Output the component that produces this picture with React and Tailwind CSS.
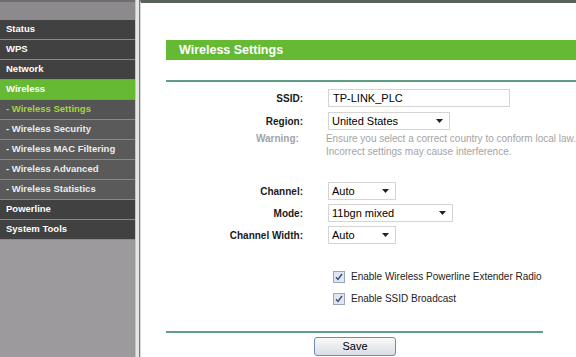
import React from 'react';

const menu = [
  { label: 'Status', type: 'main' },
  { label: 'WPS', type: 'main' },
  { label: 'Network', type: 'main' },
  { label: 'Wireless', type: 'active' },
  { label: '- Wireless Settings', type: 'subActive' },
  { label: '- Wireless Security', type: 'sub' },
  { label: '- Wireless MAC Filtering', type: 'sub' },
  { label: '- Wireless Advanced', type: 'sub' },
  { label: '- Wireless Statistics', type: 'sub' },
  { label: 'Powerline', type: 'main' },
  { label: 'System Tools', type: 'main' },
];

const itemClass = {
  main: 'bg-[#414141] text-white',
  active: 'bg-[#66b933] text-white',
  subActive: 'bg-[#545454] text-[#a8d43c]',
  sub: 'bg-[#5a5a5a] text-[#ececec]',
};

const Select = ({ value, width }) => (
  <div
    className={`${width} h-[18px] border border-[#d4d4d4] bg-white flex items-center justify-between pl-[3px] pr-[6px] text-[11px]`}
  >
    <span>{value}</span>
    <svg width="7" height="4" viewBox="0 0 7 4">
      <path d="M0 0h7L3.5 4z" fill="#222" />
    </svg>
  </div>
);

const Row = ({ label, children }) => (
  <div className="flex items-center h-[18px]">
    <div className="w-[162px] text-right pr-[25px] font-bold text-[#1a1a1a] whitespace-nowrap">{label}</div>
    {children}
  </div>
);

const Check = ({ label }) => (
  <div className="flex items-center gap-[6px] pl-[167px] h-[13px]">
    <div className="w-[12px] h-[12px] border border-[#9aa6b8] bg-[#dfe6ef] flex items-center justify-center">
      <svg width="8" height="8" viewBox="0 0 8 8">
        <path d="M1 4.2l2 2.2L7 1" stroke="#3a4a7a" strokeWidth="1.4" fill="none" />
      </svg>
    </div>
    <span className="text-[#222] whitespace-nowrap">{label}</span>
  </div>
);

export default function App() {
  return (
    <div className="w-[576px] h-[357px] overflow-hidden flex bg-white text-[10px] font-['Liberation_Sans',Arial,sans-serif]">
      {/* Sidebar */}
      <div className="w-[135px] shrink-0 h-full bg-[#9c9a9c] flex flex-col">
        <div className="h-[20px] shrink-0 bg-[#8c8a8c] border-t-[2px] border-[#6d6d6d]" />
        {menu.map((m) => (
          <div
            key={m.label}
            className={`h-[20px] shrink-0 border-b border-[#8a8a8a] flex items-center pl-[6px] font-bold text-[9.5px] whitespace-nowrap ${itemClass[m.type]}`}
          >
            {m.label}
          </div>
        ))}
      </div>

      {/* Divider */}
      <div className="w-[5px] shrink-0 h-full bg-[#e6e6e6] border-l border-[#c4c4c4] border-r border-r-[#7a7a7a]" />

      {/* Content */}
      <div className="flex-1 min-w-0 h-full border-t-[3px] border-[#56625a] border-l border-l-[#d8d8d8] pl-[25px]">
        <div className="mt-[37px] h-[20px] bg-[#66b933] text-white font-bold text-[12.5px] flex items-center pl-[13px]">
          Wireless Settings
        </div>
        <div className="mt-[20px] h-[2px] bg-[#5f9e82]" />

        <div className="flex flex-col gap-[5px] mt-[7px]">
          <Row label="SSID:">
            <div className="w-[182px] h-[18px] border border-[#d4d4d4] flex items-center pl-[4px] text-[11px]">
              TP-LINK_PLC
            </div>
          </Row>
          <Row label="Region:">
            <Select value="United States" width="w-[122px]" />
          </Row>
          <div className="flex leading-[13px] -mt-[3px]">
            <div className="w-[162px] text-right pr-[25px] font-bold text-[#a4a4a4]">Warning:</div>
            <div className="text-[#a4a4a4] pl-[2px] whitespace-nowrap">
              <div>Ensure you select a correct country to conform local law.</div>
              <div>Incorrect settings may cause interference.</div>
            </div>
          </div>
        </div>

        <div className="flex flex-col gap-[4px] mt-[24px]">
          <Row label="Channel:">
            <Select value="Auto" width="w-[68px]" />
          </Row>
          <Row label="Mode:">
            <Select value="11bgn mixed" width="w-[125px]" />
          </Row>
          <Row label="Channel Width:">
            <Select value="Auto" width="w-[68px]" />
          </Row>
        </div>

        <div className="flex flex-col gap-[9px] mt-[26px]">
          <Check label="Enable Wireless Powerline Extender Radio" />
          <Check label="Enable SSID Broadcast" />
        </div>

        <div className="mt-[26px] h-[2px] w-[377px] bg-[#5f9e82]" />

        <div className="mt-[4px] pl-[148px]">
          <button className="w-[82px] h-[19px] rounded-[3px] border border-[#6f8ab0] bg-gradient-to-b from-[#fafafa] to-[#d8dde4] text-[11px] text-black">
            Save
          </button>
        </div>
      </div>
    </div>
  );
}
